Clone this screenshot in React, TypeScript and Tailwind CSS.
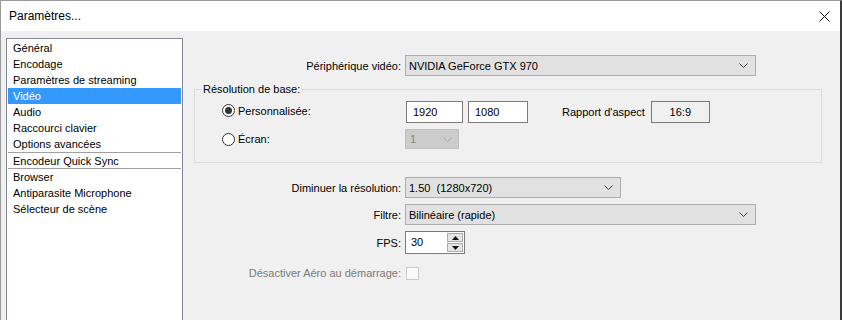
import React from "react";

const ITEMS_TOP = [
  "Général",
  "Encodage",
  "Paramètres de streaming",
  "Vidéo",
  "Audio",
  "Raccourci clavier",
  "Options avancées",
];
const ITEMS_BOTTOM = ["Browser", "Antiparasite Microphone", "Sélecteur de scène"];

function Chevron({ className = "" }: { className?: string }) {
  return (
    <svg width="9" height="5" viewBox="0 0 9 5" className={className}>
      <path d="M0.5 0.5 L4.5 4.5 L8.5 0.5" fill="none" stroke="currentColor" strokeWidth="1" />
    </svg>
  );
}

function Select({ value, width }: { value: string; width: string }) {
  return (
    <div
      className={`${width} flex h-[21px] items-center justify-between border border-[#adadad] bg-[#e1e1e1] pl-[3px] pr-[7px] text-black`}
    >
      <span className="whitespace-pre">{value}</span>
      <Chevron className="text-[#3c3c3c]" />
    </div>
  );
}

function Radio({ checked }: { checked?: boolean }) {
  return (
    <span className="flex h-[13px] w-[13px] items-center justify-center rounded-full border border-[#333] bg-white">
      {checked && <span className="h-[7px] w-[7px] rounded-full bg-[#333]" />}
    </span>
  );
}

function Row({ label, children, muted }: { label: string; children: React.ReactNode; muted?: boolean }) {
  return (
    <div className="flex items-center gap-[4px]">
      <span className={`w-[207px] text-right ${muted ? "text-[#7a7a7a]" : "text-black"}`}>{label}</span>
      {children}
    </div>
  );
}

export default function App() {
  return (
    <div className="flex h-[320px] w-[842px] flex-col overflow-hidden border-l border-t border-r-2 border-[#9a9a9a] border-r-[#3a3a3a] bg-[#f0f0f0] font-['Liberation_Sans',Arial,sans-serif] text-[11px] leading-[14px] text-black">
      {/* title bar */}
      <div className="flex h-[30px] shrink-0 items-center justify-between bg-white pl-[8px] pr-[10px]">
        <span className="text-[12px]">Paramètres...</span>
        <svg width="11" height="11" viewBox="0 0 11 11">
          <path d="M0.5 0.5 L10.5 10.5 M10.5 0.5 L0.5 10.5" stroke="#111" strokeWidth="1" />
        </svg>
      </div>

      <div className="flex flex-1 pt-[7px]">
        {/* category list */}
        <div className="ml-[5px] h-[300px] w-[177px] shrink-0 border border-[#828790] bg-white px-[1px] pt-[1px]">
          {ITEMS_TOP.map((item) => (
            <div
              key={item}
              className={`flex h-[16px] items-center pl-[5px] ${
                item === "Vidéo" ? "bg-[#3399ff] text-white" : ""
              }`}
            >
              {item}
            </div>
          ))}
          <div className="flex h-[17px] items-center border-y border-[#a0a0a0] pl-[5px]">Encodeur Quick Sync</div>
          {ITEMS_BOTTOM.map((item) => (
            <div key={item} className="flex h-[16px] items-center pl-[5px]">
              {item}
            </div>
          ))}
        </div>

        {/* video settings */}
        <div className="ml-[11px] flex w-[628px] flex-col">
          <div className="mt-[17px]">
            <Row label="Périphérique vidéo:">
              <Select value="NVIDIA GeForce GTX 970" width="w-[351px]" />
            </Row>
          </div>

          <fieldset className="mt-[6px] border border-[#dcdcdc] pb-[13px]">
            <legend className="ml-[6px] px-[2px]">Résolution de base:</legend>
            <div className="mt-[5px] flex h-[22px] items-center pl-[27px]">
              <label className="flex w-[184px] items-center gap-[3px] -mt-[3px]">
                <Radio checked />
                <span>Personnalisée:</span>
              </label>
              <div className="flex h-[22px] w-[57px] items-center border border-[#7a7a7a] bg-white pl-[6px]">1920</div>
              <div className="ml-[5px] flex h-[22px] w-[60px] items-center border border-[#7a7a7a] bg-white pl-[6px]">1080</div>
              <span className="ml-[34px]">Rapport d'aspect</span>
              <div className="ml-[6px] flex h-[22px] w-[59px] items-center justify-center border border-[#7a7a7a] bg-[#f0f0f0]">
                16:9
              </div>
            </div>
            <div className="mt-[6px] flex h-[20px] items-center pl-[27px]">
              <label className="flex w-[183px] items-center gap-[3px]">
                <Radio />
                <span>Écran:</span>
              </label>
              <div className="flex h-[20px] w-[54px] items-center justify-between border border-[#bfbfbf] bg-[#cccccc] pl-[4px] pr-[6px] text-[#838383]">
                <span>1</span>
                <Chevron className="text-[#a8a8a8]" />
              </div>
            </div>
          </fieldset>

          <div className="mt-[14px]">
            <Row label="Diminuer la résolution:">
              <Select value="1.50  (1280x720)" width="w-[216px]" />
            </Row>
          </div>
          <div className="mt-[6px]">
            <Row label="Filtre:">
              <Select value="Bilinéaire (rapide)" width="w-[351px]" />
            </Row>
          </div>
          <div className="mt-[6px]">
            <Row label="FPS:">
              <div className="flex h-[23px] w-[60px] items-stretch border border-[#7a7a7a] bg-white">
                <span className="flex flex-1 items-start pl-[5px] pt-[3px]">30</span>
                <div className="flex w-[17px] flex-col gap-[1px] py-[1px] pr-[1px]">
                  <div className="flex flex-1 items-center justify-center border border-[#adadad] bg-[#e5e5e5]">
                    <svg width="7" height="4" viewBox="0 0 7 4">
                      <path d="M0 4 L3.5 0 L7 4 Z" fill="#111" />
                    </svg>
                  </div>
                  <div className="flex flex-1 items-center justify-center border border-[#adadad] bg-[#e5e5e5]">
                    <svg width="7" height="4" viewBox="0 0 7 4">
                      <path d="M0 0 L7 0 L3.5 4 Z" fill="#111" />
                    </svg>
                  </div>
                </div>
              </div>
            </Row>
          </div>
          <div className="mt-[12px]">
            <Row label="Désactiver Aéro au démarrage:" muted>
              <span className="ml-[1px] h-[13px] w-[13px] border border-[#cccccc] bg-[#fafafa]" />
            </Row>
          </div>
        </div>
      </div>
    </div>
  );
}
